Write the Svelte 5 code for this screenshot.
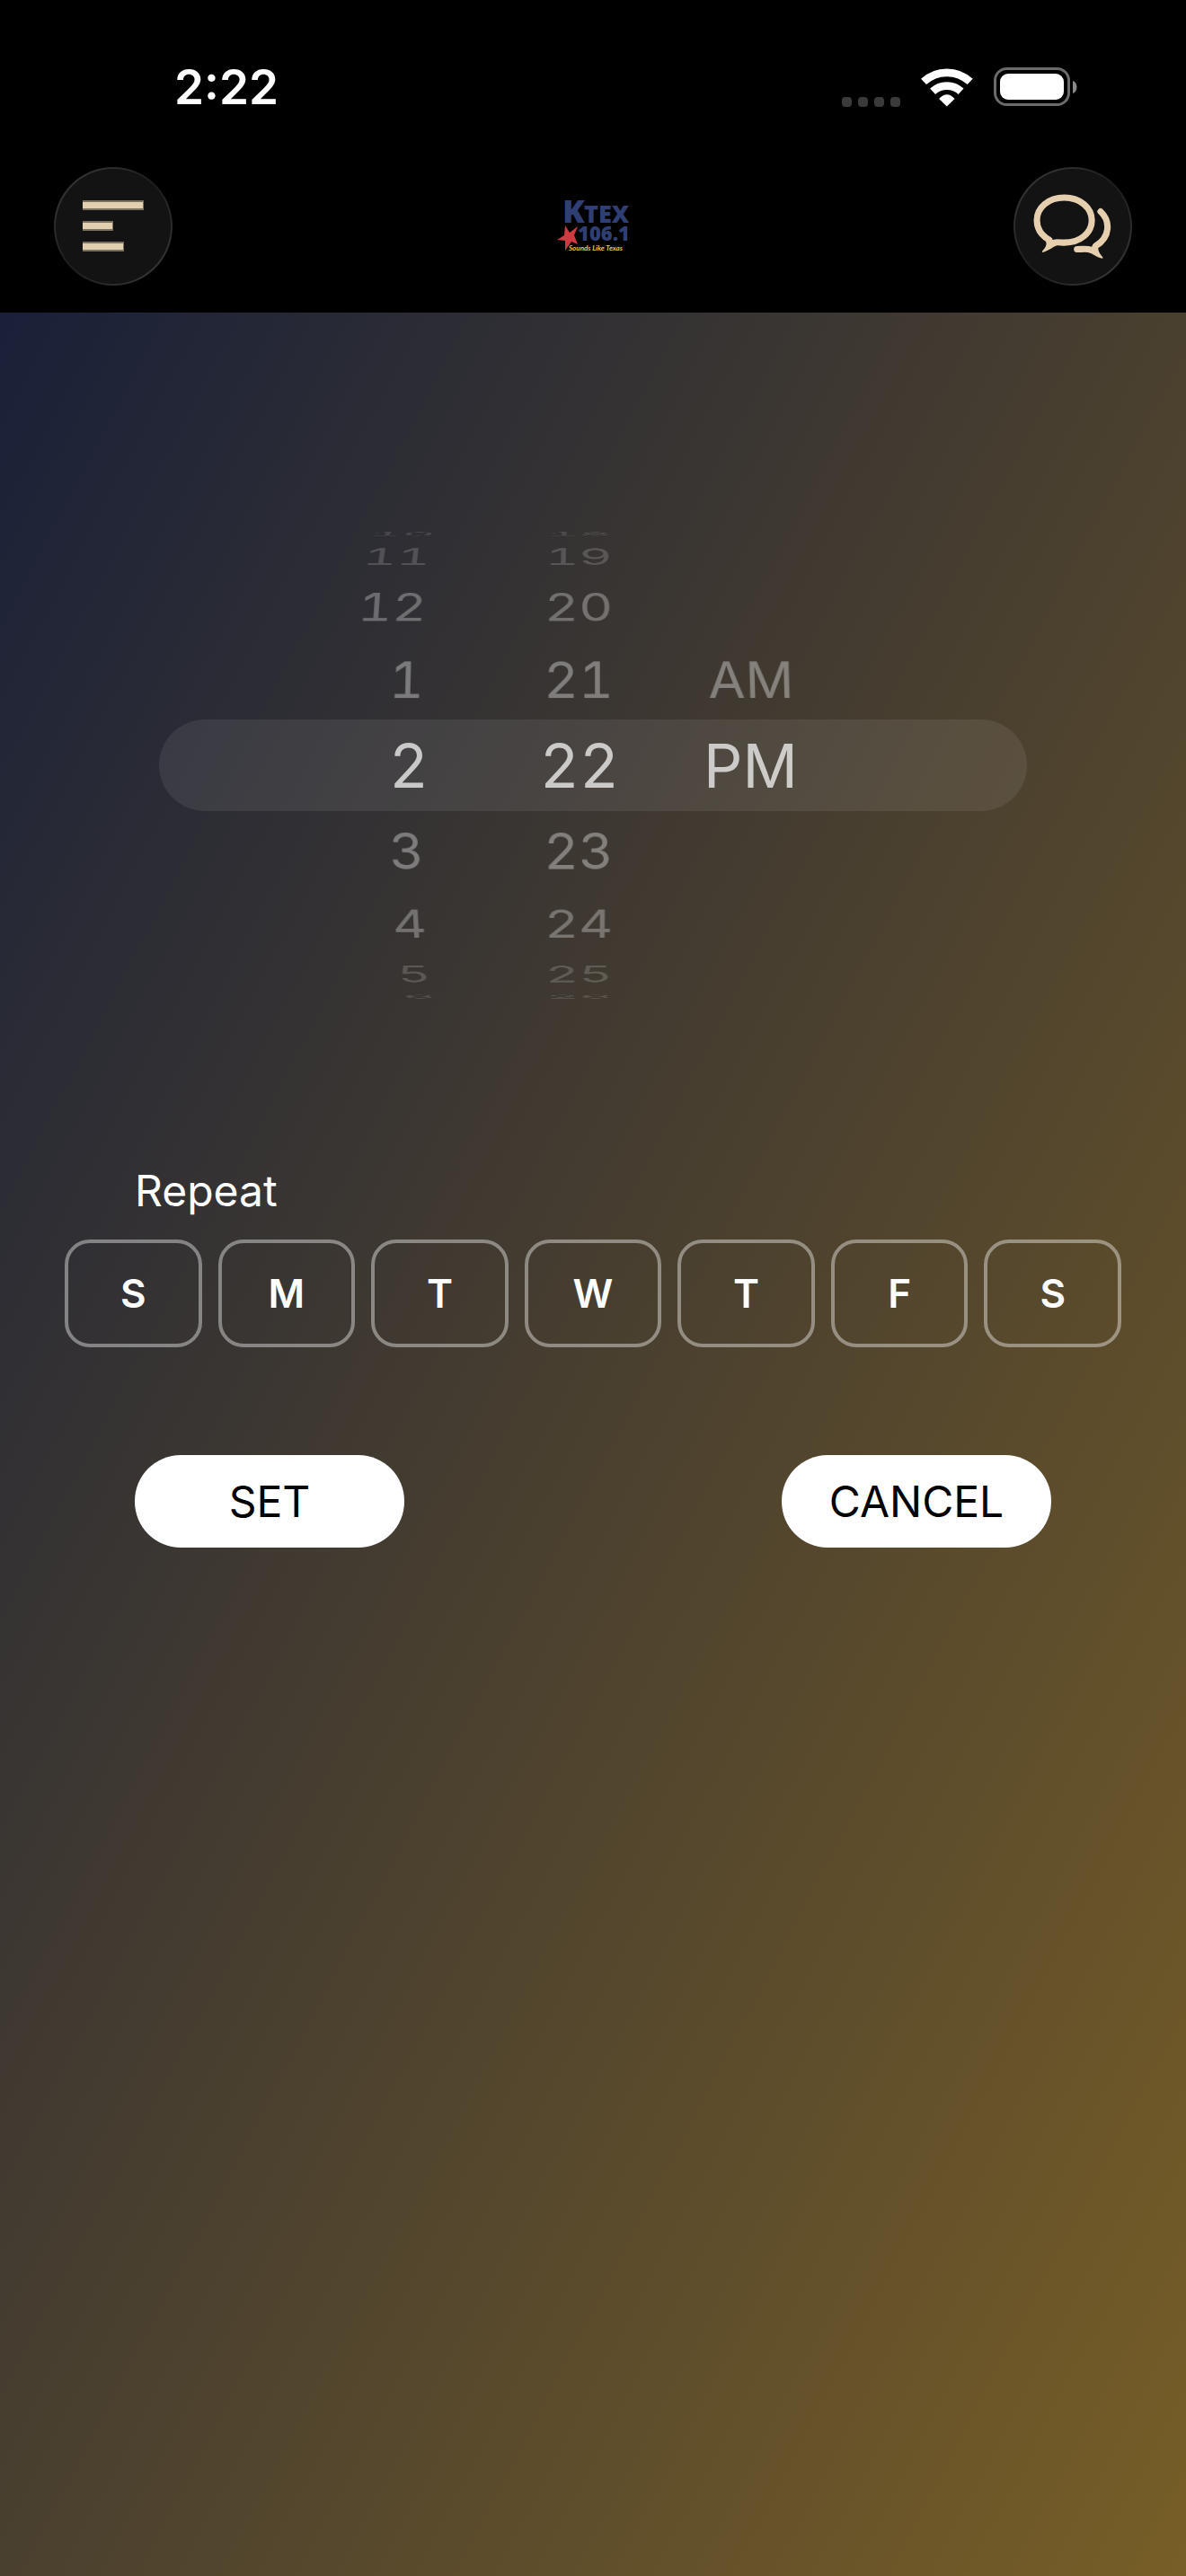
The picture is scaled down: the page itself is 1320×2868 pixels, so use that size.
<script>
  const STEP = 19.8;
  const RADIUS = 283;
  const FADE = [0.72, 0.36, 0.3, 0.17, 0.12];
  const periods = ['AM', 'PM'];
  const dayNames = ['Sunday', 'Monday', 'Tuesday', 'Wednesday', 'Thursday', 'Friday', 'Saturday'];

  let hour = $state(2);
  let minute = $state(22);
  let period = $state(1);
  let repeat = $state(dayNames.map(() => false));

  const offsets = [-4, -3, -2, -1, 0, 1, 2, 3, 4];

  const hourRows = $derived(
    offsets.map((offset) => {
      const value = ((hour - 1 + offset + 12) % 12) + 1;
      return { offset, value, label: String(value) };
    })
  );
  const minuteRows = $derived(
    offsets.map((offset) => {
      const value = (minute + offset + 60) % 60;
      return { offset, value, label: String(value).padStart(2, '0') };
    })
  );
  const periodRows = $derived(
    periods.map((label, value) => ({ offset: value - period, value, label }))
  );

  function rowStyle(offset) {
    const angle = -offset * STEP;
    return `transform: rotateX(${angle}deg) translateZ(${RADIUS}px); opacity: ${FADE[Math.abs(offset)]}`;
  }

  function reset() {
    hour = 2;
    minute = 22;
    period = 1;
    repeat = dayNames.map(() => false);
  }
</script>

{#snippet wheel(name, kind, rows, pick)}
  <div class="wheel {kind}" role="group" aria-label={name}>
    {#each rows as row (row.value)}
      <button
        type="button"
        class="row"
        class:selected={row.offset === 0}
        aria-pressed={row.offset === 0}
        style={rowStyle(row.offset)}
        onclick={() => pick(row.value)}
      >{row.label}</button>
    {/each}
  </div>
{/snippet}

<div class="app">
  <header>
    <div class="status-bar">
      <time>2:22</time>
      <div class="status-icons">
        <div class="signal"><i></i><i></i><i></i><i></i></div>
        <svg class="wifi" viewBox="374 104 173 128" aria-hidden="true">
          <g fill="none" stroke="#fff" stroke-width="26">
            <path d="M383 148.4A113 113 0 0 1 537 148.4" />
            <path d="M413 180.6A69 69 0 0 1 507 180.6" />
          </g>
          <path fill="#fff" d="M460 231L434 205Q446 191 460 191T486 205Z" />
        </svg>
        <svg class="battery" viewBox="0 0 94 44" aria-hidden="true">
          <rect x="1.5" y="1.5" width="82" height="40" rx="13" fill="none" stroke="#6b6b6b" stroke-width="3" />
          <rect x="7" y="7" width="71" height="29" rx="9" fill="#fff" />
          <path d="M88 15C94 17 94 27 88 29Z" fill="#8a8a8a" />
        </svg>
      </div>
    </div>

    <nav>
      <button type="button" class="round" aria-label="Menu">
        <svg class="menu-icon" viewBox="0 0 68 58" fill="#e2cfaf" aria-hidden="true">
          <rect y="0" width="68" height="11" opacity="0.5" />
          <rect y="2" width="67" height="7" />
          <rect y="23" width="34" height="11" opacity="0.5" />
          <rect y="25" width="33" height="7" />
          <rect y="46" width="46" height="11" opacity="0.5" />
          <rect y="48" width="45" height="7" />
        </svg>
      </button>

      <svg class="logo" viewBox="-10 -14 100 88" role="img" aria-label="KTEX 106.1 Sounds Like Texas">
        <g class="logo-name">
          <text x="6" y="26" font-size="36">K</text>
          <text x="30" y="26" font-size="27">TEX</text>
          <text x="23" y="46" font-size="22">106.1</text>
        </g>
        <path fill="#cf3a41" d="M9 29L14 37L23 30L19 40L23 50L16 47L9 57L9 46L0 45L8 40Z" />
        <text class="logo-tag" x="13" y="57" font-size="8">Sounds Like Texas</text>
      </svg>

      <button type="button" class="round" aria-label="Messages">
        <svg class="chat-icon" viewBox="749 525 262 218" aria-hidden="true">
          <g fill="none" stroke="#e6cfae" stroke-width="21" stroke-linecap="round">
            <path d="M802 679C774 663 761 641 761 614C761 572 799 539 852 539C905 539 943 573 943 614C943 655 905 688 852 688C840 688 830 685 819 688" />
            <path d="M972 585C1005 616 1005 669 956 699M894 710C912 710 925 707 940 712" />
          </g>
          <path fill="#e6cfae" d="M796 668L814 680L826 698C812 703 800 715 780 720C777 720 778 717 781 714C790 704 796 692 790 683Z" />
          <path fill="#e6cfae" d="M946 696L964 706C964 716 970 725 979 736C981 740 978 741 974 740C958 735 949 726 934 720Z" />
        </svg>
      </button>
    </nav>
  </header>

  <main>
    <div class="picker">
      <div class="band"></div>
      <div class="wheels">
        {@render wheel('Hour', 'hours', hourRows, (v) => (hour = v))}
        {@render wheel('Minute', 'minutes', minuteRows, (v) => (minute = v))}
        {@render wheel('AM or PM', 'periods', periodRows, (v) => (period = v))}
      </div>
    </div>

    <h2 id="repeat-label">Repeat</h2>
    <div class="days" role="group" aria-labelledby="repeat-label">
      {#each dayNames as day, i}
        <button
          type="button"
          class="day"
          class:on={repeat[i]}
          aria-label={day}
          aria-pressed={repeat[i]}
          onclick={() => (repeat[i] = !repeat[i])}
        >{day[0]}</button>
      {/each}
    </div>

    <div class="actions">
      <button type="button">SET</button>
      <button type="button" onclick={reset}>CANCEL</button>
    </div>
  </main>
</div>

<style>
  :global(body) {
    background: #000;
  }

  .app {
    display: flex;
    flex-direction: column;
    min-height: 100vh;
    font-family: Inter, 'Liberation Sans', sans-serif;
    color: #fff;
  }

  button {
    padding: 0;
    border: none;
    background: none;
    color: inherit;
    font-family: inherit;
    cursor: pointer;
  }

  header {
    padding: 65px 60px 30px;
    background: #000;
  }

  .status-bar {
    display: flex;
    justify-content: space-between;
    align-items: center;
    height: 64px;
    margin-bottom: 57px;
    padding: 0 60px 0 134px;
  }

  time {
    font-size: 53px;
    font-weight: 600;
    line-height: 64px;
  }

  .status-icons {
    display: flex;
    align-items: flex-end;
    gap: 23px;
  }

  .signal {
    display: flex;
    gap: 7px;
  }

  .signal i {
    width: 11px;
    height: 11px;
    border-radius: 4px;
    background: #3a3a3a;
  }

  .wifi {
    width: 58px;
    height: 43px;
  }

  .battery {
    width: 94px;
    height: 44px;
  }

  nav {
    display: flex;
    justify-content: space-between;
    align-items: center;
  }

  .round {
    display: grid;
    place-items: center;
    width: 132px;
    height: 132px;
    border: 2px solid transparent;
    border-radius: 50%;
    background:
      linear-gradient(#131313, #131313) padding-box,
      linear-gradient(135deg, #3c3c3c, #1c1c1c 50%, #3c3c3c) border-box;
  }

  .menu-icon {
    width: 68px;
    height: 58px;
  }

  .chat-icon {
    width: 88px;
    height: 74px;
  }

  .logo {
    width: 100px;
    height: 88px;
  }

  .logo-name {
    fill: #2f3f73;
    font-family: 'Open Sans', sans-serif;
    font-weight: 800;
  }

  .logo-tag {
    fill: #e5c860;
    font-family: Lato, sans-serif;
    font-style: italic;
    font-weight: 700;
  }

  main {
    flex: 1;
    padding: 180px 72px 120px;
    background: linear-gradient(to bottom right, #192038, #4a402f 50%, #775e27);
  }

  .picker {
    display: grid;
    align-items: center;
    height: 648px;
    margin: 0 105px;
  }

  .band,
  .wheels {
    grid-area: 1 / 1;
  }

  .band {
    height: 102px;
    border-radius: 51px;
    background: rgba(255, 255, 255, 0.08);
  }

  .wheels {
    display: grid;
    grid-template-columns: 300px 118px 1fr;
    column-gap: 94px;
    perspective: 2900px;
    perspective-origin: 49% 50%;
  }

  .wheel {
    display: grid;
    transform: translateZ(-283px);
    transform-style: preserve-3d;
  }

  .row {
    grid-area: 1 / 1;
    justify-self: end;
    padding: 0 6px;
    font-size: 60px;
    line-height: 96px;
    font-variant-numeric: tabular-nums;
  }

  .periods .row {
    justify-self: start;
  }

  .row.selected {
    padding: 0;
    font-size: 68px;
  }

  h2 {
    margin: 120px 78px 24px;
    font-size: 48px;
    font-weight: 400;
    line-height: 60px;
  }

  .days {
    display: grid;
    grid-template-columns: repeat(7, 1fr);
    gap: 18px;
  }

  .day {
    height: 120px;
    border: 4px solid rgba(255, 255, 255, 0.4);
    border-radius: 28px;
    font-size: 44px;
    font-weight: 600;
  }

  .day.on {
    background: rgba(255, 255, 255, 0.4);
  }

  .actions {
    display: flex;
    justify-content: space-between;
    margin: 120px 78px 0;
  }

  .actions button {
    width: 300px;
    height: 103px;
    border-radius: 51px;
    background: #fff;
    color: #000;
    font-size: 48px;
  }
</style>
